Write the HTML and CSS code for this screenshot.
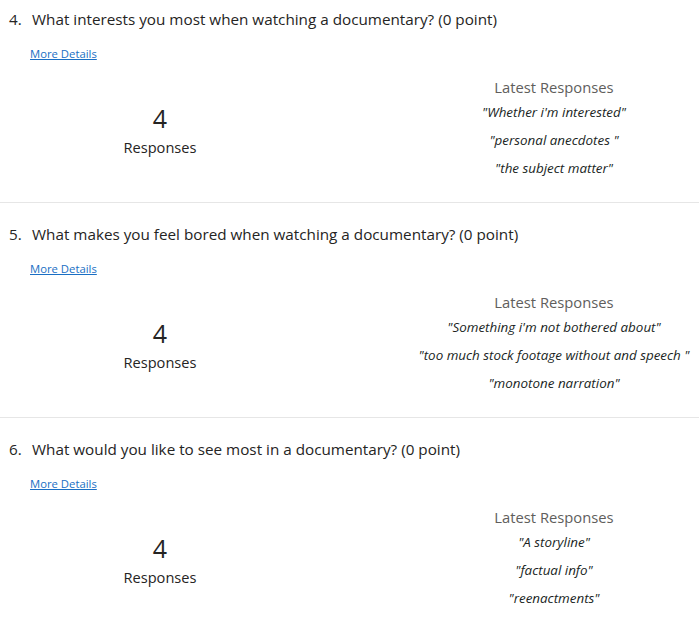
FILE: index.html
```html
<!DOCTYPE html>
<html>
<head>
<meta charset="utf-8">
<link rel="stylesheet" href="styles.css">
</head>
<body>
<main class="results">
  <section class="q first">
    <div class="q-title"><span class="num">4.</span><span>What interests you most when watching a documentary? (0 point)</span></div>
    <a class="more" href="#">More Details</a>
    <div class="stats">
      <div class="count"><div class="big">4</div><div class="lbl">Responses</div></div>
      <div class="latest">
        <div class="latest-h">Latest Responses</div>
        <ul class="items">
          <li>"Whether i'm interested"</li>
          <li>"personal anecdotes "</li>
          <li>"the subject matter"</li>
        </ul>
      </div>
    </div>
  </section>
  <section class="q">
    <div class="q-title"><span class="num">5.</span><span>What makes you feel bored when watching a documentary? (0 point)</span></div>
    <a class="more" href="#">More Details</a>
    <div class="stats">
      <div class="count"><div class="big">4</div><div class="lbl">Responses</div></div>
      <div class="latest">
        <div class="latest-h">Latest Responses</div>
        <ul class="items">
          <li>"Something i'm not bothered about"</li>
          <li>"too much stock footage without and speech "</li>
          <li>"monotone narration"</li>
        </ul>
      </div>
    </div>
  </section>
  <section class="q">
    <div class="q-title"><span class="num">6.</span><span>What would you like to see most in a documentary? (0 point)</span></div>
    <a class="more" href="#">More Details</a>
    <div class="stats">
      <div class="count"><div class="big">4</div><div class="lbl">Responses</div></div>
      <div class="latest">
        <div class="latest-h">Latest Responses</div>
        <ul class="items">
          <li>"A storyline"</li>
          <li>"factual info"</li>
          <li>"reenactments"</li>
        </ul>
      </div>
    </div>
  </section>
</main>
</body>
</html>
```
FILE: styles.css
```css
html { overflow: hidden; }
body {
  margin: 0;
  background: #ffffff;
  font-family: "Open Sans", "Noto Sans", sans-serif;
  color: #252423;
}
.results { display: flex; flex-direction: column; }
.q {
  border-top: 1px solid #e6e6e6;
  padding: 21px 0 20px 0;
  display: flex;
  flex-direction: column;
}
.q.first { border-top: none; padding-top: 9px; padding-bottom: 20px; }
.q-title {
  display: flex;
  padding-left: 9px;
  font-size: 15.25px;
  line-height: 20px;
  height: 20px;
  white-space: nowrap;
}
.num { width: 23px; }
.more {
  align-self: flex-start;
  margin: 17px 0 0 30px;
  font-size: 11.3px;
  line-height: 16px;
  color: #1a6fc4;
  text-decoration: underline;
}
.stats {
  margin-top: 15px;
  display: grid;
  grid-template-columns: 320px 290px;
  justify-content: space-between;
}
.count { margin-top: 25px; text-align: center; }
.big { font-size: 25px; line-height: 32px; color: #252423; }
.lbl { margin-top: 3px; font-size: 14.6px; line-height: 20px; color: #252423; }
.latest { text-align: center; }
.latest-h { font-size: 14.75px; line-height: 20px; color: #605e5c; }
.items { list-style: none; margin: 0; padding: 1px 0 0 0; }
.items li {
  font-style: italic;
  font-size: 13.4px;
  line-height: 28px;
  color: #201f1e;
  white-space: nowrap;
}
```
